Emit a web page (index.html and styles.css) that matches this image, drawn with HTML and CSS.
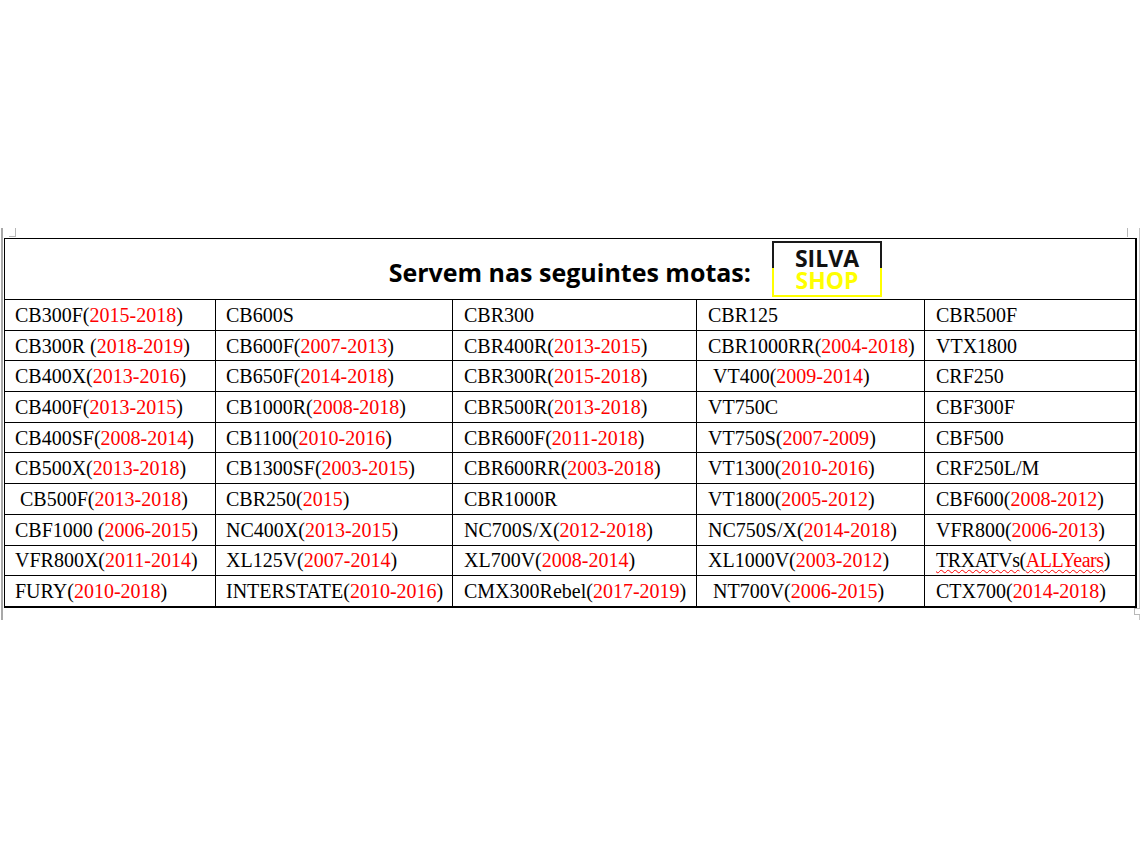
FILE: index.html
```html
<!DOCTYPE html>
<html lang="pt">
<head>
<meta charset="utf-8">
<title>Servem nas seguintes motas</title>
<link rel="stylesheet" href="styles.css">
</head>
<body>
<div class="page">
  <div class="frame">
    <span class="tick tick-left"></span>
    <span class="tick tick-right"></span>
    <table class="models">
      <colgroup>
        <col class="c1"><col class="c2"><col class="c3"><col class="c4"><col class="c5">
      </colgroup>
      <tr class="head">
        <td colspan="5">
          <span class="title">Servem nas seguintes motas:</span>
          <div class="logo"><span class="silva">SILVA</span><span class="shop">SHOP</span></div>
        </td>
      </tr>
      <tr>
        <td>CB300F(<span class="y">2015-2018</span>)</td>
        <td>CB600S</td>
        <td>CBR300</td>
        <td>CBR125</td>
        <td>CBR500F</td>
      </tr>
      <tr>
        <td>CB300R (<span class="y">2018-2019</span>)</td>
        <td>CB600F(<span class="y">2007-2013</span>)</td>
        <td>CBR400R(<span class="y">2013-2015</span>)</td>
        <td>CBR1000RR(<span class="y">2004-2018</span>)</td>
        <td>VTX1800</td>
      </tr>
      <tr>
        <td>CB400X(<span class="y">2013-2016</span>)</td>
        <td>CB650F(<span class="y">2014-2018</span>)</td>
        <td>CBR300R(<span class="y">2015-2018</span>)</td>
        <td>&nbsp;VT400(<span class="y">2009-2014</span>)</td>
        <td>CRF250</td>
      </tr>
      <tr>
        <td>CB400F(<span class="y">2013-2015</span>)</td>
        <td>CB1000R(<span class="y">2008-2018</span>)</td>
        <td>CBR500R(<span class="y">2013-2018</span>)</td>
        <td>VT750C</td>
        <td>CBF300F</td>
      </tr>
      <tr>
        <td>CB400SF(<span class="y">2008-2014</span>)</td>
        <td>CB1100(<span class="y">2010-2016</span>)</td>
        <td>CBR600F(<span class="y">2011-2018</span>)</td>
        <td>VT750S(<span class="y">2007-2009</span>)</td>
        <td>CBF500</td>
      </tr>
      <tr>
        <td>CB500X(<span class="y">2013-2018</span>)</td>
        <td>CB1300SF(<span class="y">2003-2015</span>)</td>
        <td>CBR600RR(<span class="y">2003-2018</span>)</td>
        <td>VT1300(<span class="y">2010-2016</span>)</td>
        <td>CRF250L/M</td>
      </tr>
      <tr>
        <td>&nbsp;CB500F(<span class="y">2013-2018</span>)</td>
        <td>CBR250(<span class="y">2015</span>)</td>
        <td>CBR1000R</td>
        <td>VT1800(<span class="y">2005-2012</span>)</td>
        <td>CBF600(<span class="y">2008-2012</span>)</td>
      </tr>
      <tr>
        <td>CBF1000 (<span class="y">2006-2015</span>)</td>
        <td>NC400X(<span class="y">2013-2015</span>)</td>
        <td>NC700S/X(<span class="y">2012-2018</span>)</td>
        <td>NC750S/X(<span class="y">2014-2018</span>)</td>
        <td>VFR800(<span class="y">2006-2013</span>)</td>
      </tr>
      <tr>
        <td>VFR800X(<span class="y">2011-2014</span>)</td>
        <td>XL125V(<span class="y">2007-2014</span>)</td>
        <td>XL700V(<span class="y">2008-2014</span>)</td>
        <td>XL1000V(<span class="y">2003-2012</span>)</td>
        <td class="narrow"><span class="spell">TRXATVs</span>(<span class="y spell">ALLYears</span>)</td>
      </tr>
      <tr>
        <td>FURY(<span class="y">2010-2018</span>)</td>
        <td>INTERSTATE(<span class="y">2010-2016</span>)</td>
        <td>CMX300Rebel(<span class="y">2017-2019</span>)</td>
        <td>&nbsp;NT700V(<span class="y">2006-2015</span>)</td>
        <td>CTX700(<span class="y">2014-2018</span>)</td>
      </tr>
    </table>
    <span class="handle"></span>
  </div>
</div>
</body>
</html>
```
FILE: styles.css
```css
html, body {
  margin: 0;
  padding: 0;
  background: #ffffff;
}

.page {
  padding-top: 228px;
}

.frame {
  position: relative;
  box-sizing: border-box;
  margin-left: 1px;
  width: 1139px;
  height: 392px;
  border-left: 2px solid #a8a8a8;
  border-right: 1px solid #c4c4c4;
  padding: 10px 4px 0 1px;
}

.tick {
  position: absolute;
  top: 0;
  width: 1px;
  height: 9px;
  background: #b8b8b8;
}
.tick-left { left: 12px; }
.tick-left::after {
  content: "";
  position: absolute;
  left: -6px;
  top: 8px;
  width: 6px;
  height: 1px;
  background: #b8b8b8;
}
.tick-right { left: 1124px; }

.handle {
  position: absolute;
  left: 1131px;
  top: 380px;
  width: 5px;
  height: 5px;
  border: 1px solid #b8b8b8;
  background: #fff;
}

.models {
  border-collapse: collapse;
  table-layout: fixed;
  width: 1131px;
  font-family: "Liberation Serif", "Times New Roman", serif;
  font-size: 20px;
  color: #000;
  border-top: 1px solid #000;
  border-left: 1px solid #000;
  border-right: 2px solid #000;
  border-bottom: 2px solid #000;
}

.c1 { width: 211px; }
.c2 { width: 237px; }
.c3 { width: 244px; }
.c4 { width: 228px; }
.c5 { width: 211px; }

.models td {
  border: 1px solid #000;
  height: 29.7px;
  padding: 0 0 0 10px;
  line-height: 22px;
  white-space: nowrap;
  vertical-align: middle;
  overflow: visible;
}

.models tr:nth-child(n+2) td:nth-child(3),
.models tr:nth-child(n+2) td:nth-child(4),
.models tr:nth-child(n+2) td:nth-child(5) {
  padding-left: 11px;
}

.models td.narrow {
  letter-spacing: -0.45px;
}

.models .head td {
  position: relative;
  height: 60px;
  padding: 0;
  text-align: center;
}

.title {
  display: inline-block;
  font-family: "Open Sans", "Liberation Sans", sans-serif;
  font-weight: 700;
  font-size: 25px;
  letter-spacing: 0;
  line-height: 30px;
  padding-top: 6px;
}

.logo {
  position: absolute;
  left: 767px;
  top: 2px;
  width: 110px;
  height: 56px;
  box-sizing: border-box;
  border: 2px solid #ffff00;
  border-top-color: #1a1a1a;
  display: flex;
  flex-direction: column;
  align-items: center;
  font-family: "Open Sans", "Liberation Sans", sans-serif;
  font-weight: 700;
  font-size: 23px;
  line-height: 22px;
  padding-top: 4px;
}
.logo::before,
.logo::after {
  content: "";
  position: absolute;
  top: -2px;
  width: 2px;
  height: 27px;
  background: #1a1a1a;
}
.logo::before { left: -2px; }
.logo::after { right: -2px; }

.silva { color: #111; }
.shop { color: #ffff00; }

.y { color: #ff0000; }

.spell {
  text-decoration: underline wavy #ff0000;
  text-decoration-thickness: 1px;
  text-underline-offset: 2px;
}
```
